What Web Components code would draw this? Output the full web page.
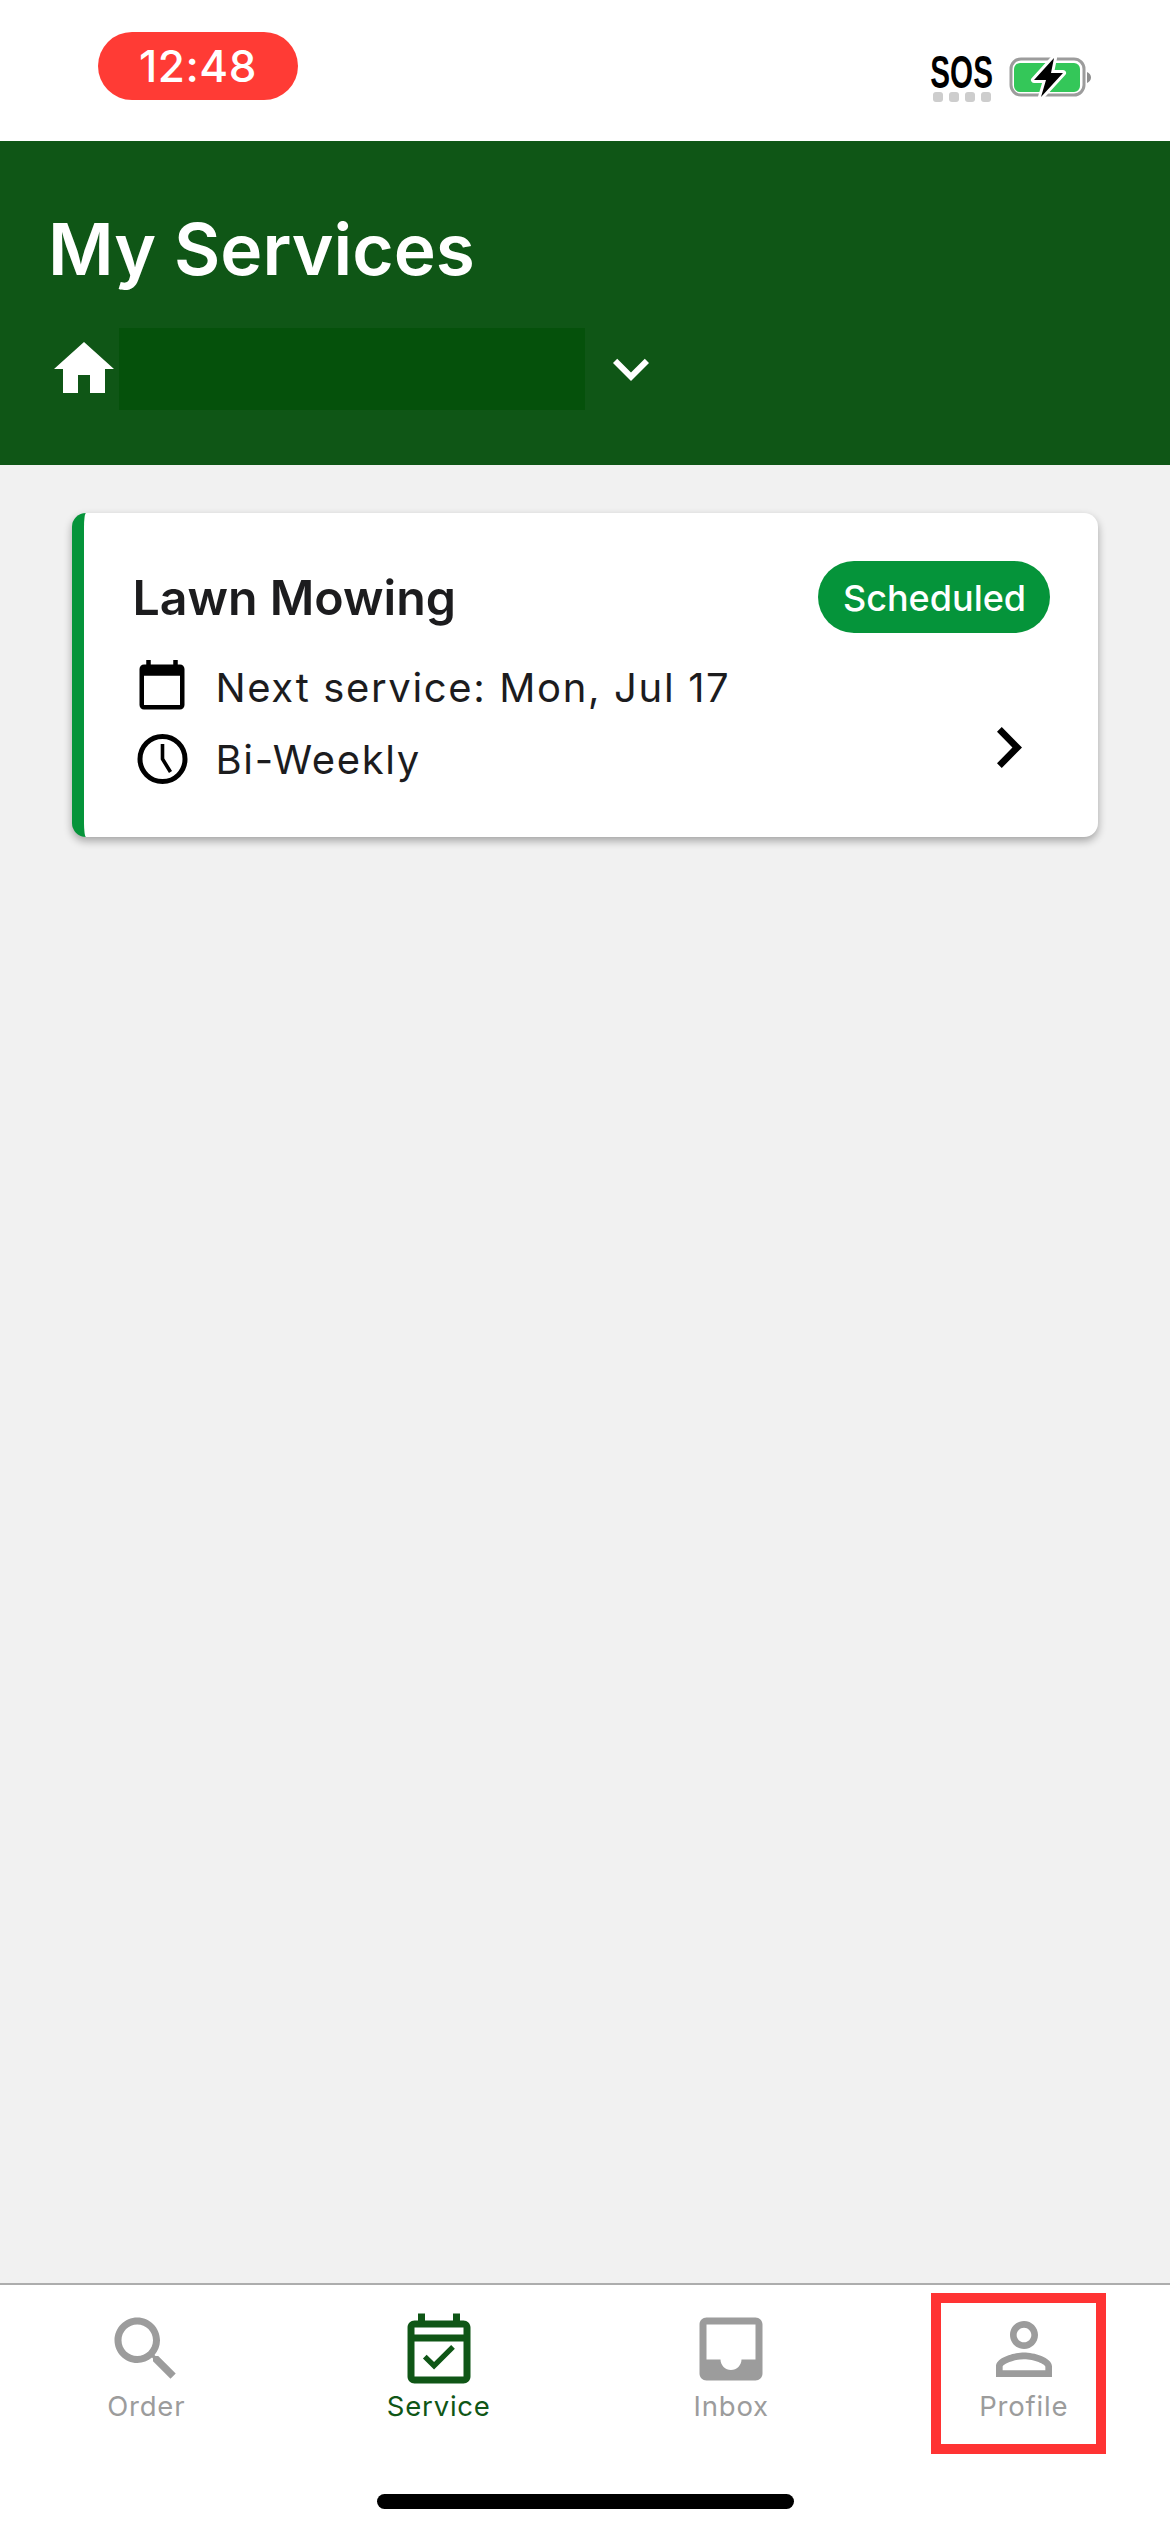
<!DOCTYPE html>
<html lang="en">
<head>
<meta charset="utf-8">
<title>My Services</title>
<style>
html,body{margin:0;padding:0;background:#f1f1f1}
body{font-family:Inter,"Liberation Sans",sans-serif}
</style>
</head>
<body>
<x-app>
  <x-status-bar slot="status" time="12:48"></x-status-bar>
  <x-page-header slot="header" title="My Services"></x-page-header>
  <x-service-card title="Lawn Mowing" status="Scheduled" next="Next service: Mon, Jul 17" freq="Bi-Weekly"></x-service-card>
  <x-tab-bar slot="tabs">
    <x-tab-item label="Order" icon="search"></x-tab-item>
    <x-tab-item label="Service" icon="event" active></x-tab-item>
    <x-tab-item label="Inbox" icon="inbox"></x-tab-item>
    <x-tab-item label="Profile" icon="person"></x-tab-item>
  </x-tab-bar>
</x-app>
<script>
function def(name, render){
  customElements.define(name, class extends HTMLElement{
    constructor(){super();this.attachShadow({mode:'open'});}
    connectedCallback(){this.shadowRoot.innerHTML=render(this);}
  });
}
def('x-app',()=>`<style>
:host{display:flex;flex-direction:column;width:1170px;height:2532px;overflow:hidden;background:#f1f1f1}
main{flex:1;min-height:0;padding:48px 72px 0;box-sizing:border-box}
</style><slot name="status"></slot><slot name="header"></slot><main><slot></slot></main><slot name="tabs"></slot>`);

def('x-status-bar',el=>`<style>
:host{display:flex;justify-content:space-between;height:141px;background:#fff;box-sizing:border-box;padding:32px 78px 0 98px;flex:none}
.time{width:200px;height:68px;border-radius:34px;background:#ff3b35;color:#fff;font:450 44px/68px Inter,"Liberation Sans",sans-serif;text-align:center;letter-spacing:.5px}
.right{display:flex;gap:17px;padding-top:24px;align-items:flex-start}
.sos{width:61px;display:flex;flex-direction:column;align-items:center}
.txt{font:700 47px/32px "Liberation Sans",sans-serif;color:#000;transform:scaleX(.63);transform-origin:center;height:32px;margin-bottom:4px;white-space:nowrap}
.dots{display:flex;gap:6px}
.dots i{width:10px;height:10px;border-radius:3px;background:#cdcdcd}
svg{display:block}
</style>
<div class="time">${el.getAttribute('time')}</div>
<div class="right">
  <div class="sos"><div class="txt">SOS</div><div class="dots"><i></i><i></i><i></i><i></i></div></div>
  <svg width="83" height="44" viewBox="0 0 83 44">
    <rect x="2" y="3" width="73" height="36" rx="10" fill="none" stroke="#9c9c9c" stroke-width="3"/>
    <rect x="5" y="7" width="66" height="29" rx="6" fill="#34c759"/>
    <path d="M78 16c2.500 1 4 3 4 5.500s-1.500 4.500-4 5.500z" fill="#8e8e8e"/>
    <path d="M45 2L25 24h12l-5 17 22-24H42z" fill="#000" stroke="#fff" stroke-width="6" stroke-linejoin="round" paint-order="stroke"/>
  </svg>
</div>`);

def('x-page-header',el=>`<style>
:host{display:block;height:324px;background:#0f5616;box-sizing:border-box;padding:64px 0 0 48px;flex:none}
h1{margin:0;font:600 71.200px/88px Inter,"Liberation Sans",sans-serif;color:#fff}
.row{display:flex;align-items:center;margin-top:35px;height:82px}
.mask{width:466px;height:82px;background:#05510b;margin-left:-1px;flex:none}
svg{display:block;flex:none;fill:#fff}
.chev{margin-left:10px}
</style>
<h1>${el.getAttribute('title')}</h1>
<div class="row">
  <svg width="72" height="72" viewBox="0 0 24 24"><path d="M10 20v-6h4v6h5v-8h3L12 3 2 12h3v8z"/></svg>
  <div class="mask"></div>
  <svg class="chev" width="72" height="72" viewBox="0 0 24 24"><path d="M16.590 8.590L12 13.170 7.410 8.590 6 10l6 6 6-6z"/></svg>
</div>`);

def('x-service-card',el=>`<style>
:host{display:block;height:324px;box-sizing:border-box;background:#fff;border-left:12px solid #05943a;border-radius:14px;box-shadow:0 4px 9px rgba(0,0,0,.32);font-family:Inter,"Liberation Sans",sans-serif;color:#1c1c1e}
.inner{display:flex;flex-direction:column;padding:48px 48px 0 48.500px;height:100%;box-sizing:border-box}
.top{display:flex;justify-content:space-between;align-items:center;height:72px}
h2{margin:0;padding-top:2px;font:600 48.300px/58px Inter,"Liberation Sans",sans-serif}
.pill{height:72px;width:232px;border-radius:36px;background:#05943a;color:#fff;font:500 36px/74px Inter,"Liberation Sans",sans-serif;text-align:center;padding-left:1px;box-sizing:border-box}
.body{display:flex;justify-content:space-between;align-items:flex-end;margin-top:25px}
.rows{display:flex;flex-direction:column;gap:12px}
.r{display:flex;align-items:center;height:60px;gap:23px;font:400 40px/60px Inter,"Liberation Sans",sans-serif;letter-spacing:1.650px}
svg{display:block;flex:none}
.chev{margin:0 28px 22px 0}
</style>
<div class="inner">
  <div class="top"><h2>${el.getAttribute('title')}</h2><div class="pill">${el.getAttribute('status')}</div></div>
  <div class="body">
    <div class="rows">
      <div class="r"><svg width="60" height="60" viewBox="0 0 60 60"><g transform="translate(2 -.25) scale(2.250)"><path d="M20 3h-1V1h-2v2H7V1H5v2H4c-1.100 0-2 .9-2 2v16c0 1.100.9 2 2 2h16c1.100 0 2-.9 2-2V5c0-1.100-.9-2-2-2zm0 18H4V8h16v13z" fill="#000"/></g></svg><span>${el.getAttribute('next')}</span></div>
      <div class="r"><svg width="60" height="60" viewBox="0 0 60 60"><circle cx="29.500" cy="29" r="22.500" fill="none" stroke="#000" stroke-width="5"/><path d="M29.500 14v15l8 13" fill="none" stroke="#000" stroke-width="3.600"/></svg><span>${el.getAttribute('freq')}</span></div>
    </div>
    <svg class="chev" width="25" height="41" viewBox="8.590 6 7.410 12" preserveAspectRatio="none"><path d="M10 6L8.590 7.410 13.170 12l-4.580 4.590L10 18l6-6z" fill="#000"/></svg>
  </div>
</div>`);

const ICONS={
 search:{vb:'0 0 24 24',d:'M15.500 14h-.79l-.28-.27C15.410 12.590 16 11.110 16 9.500 16 5.910 13.090 3 9.500 3S3 5.910 3 9.500 5.910 16 9.500 16c1.610 0 3.090-.59 4.230-1.570l.27.28v.79l5 4.990L20.490 19l-4.990-5zm-6 0C7.010 14 5 11.990 5 9.500S7.010 5 9.500 5 14 7.010 14 9.500 11.990 14 9.500 14z'},
 event:{vb:'0 -.86 24 24',d:'M16.530 11.060L15.470 10l-4.880 4.880-2.120-2.120-1.060 1.060L10.590 17l5.940-5.940zM19 3h-1V1h-2v2H8V1H6v2H5c-1.110 0-1.990.9-1.990 2L3 19c0 1.100.89 2 2 2h14c1.100 0 2-.9 2-2V5c0-1.100-.9-2-2-2zM5 5h14v2H5V5zm14 14H5V9h14v10z'},
 inbox:{vb:'0 0 24 24',d:'M19 3H5c-1.100 0-2 .9-2 2v14c0 1.100.9 2 2 2h14c1.100 0 2-.9 2-2V5c0-1.100-.9-2-2-2zm0 12h-4c0 1.660-1.350 3-3 3s-3-1.340-3-3H5V5h14v10z'},
 person:{vb:'0 0 24 24',d:'M12 5.900c1.160 0 2.100.94 2.100 2.100s-.94 2.100-2.100 2.100S9.900 9.160 9.900 8s.94-2.100 2.100-2.100m0 9c2.970 0 6.100 1.460 6.100 2.100v1.100H5.900V17c0-.64 3.130-2.100 6.100-2.100M12 4C9.790 4 8 5.790 8 8s1.790 4 4 4 4-1.790 4-4-1.790-4-4-4zm0 9c-2.670 0-8 1.340-8 4v3h16v-3c0-2.660-5.330-4-8-4z'}
};
def('x-tab-item',el=>{
 const ic=ICONS[el.getAttribute('icon')];
 return `<style>
:host{display:flex;flex-direction:column;align-items:center;color:${el.hasAttribute('active')?'#0f5616':'#9c9c9c'}}
svg{display:block;fill:currentColor;fill-rule:evenodd;flex:none}
span{font:400 27.500px/34px Inter,"Liberation Sans",sans-serif;letter-spacing:.8px;margin-top:-2px}
</style><svg width="84" height="84" viewBox="${ic.vb}"><path d="${ic.d}"/></svg><span>${el.getAttribute('label')}</span>`;
});

def('x-tab-bar',()=>`<style>
:host{display:block;position:relative;height:249px;background:#fff;border-top:2px solid #adadad;box-sizing:border-box;flex:none}
.tabs{display:grid;grid-template-columns:repeat(4,1fr);height:209px;padding-top:22px;box-sizing:border-box}
.ind{width:417px;height:15px;border-radius:8px;background:#000;margin:0 auto}
.mark{position:absolute;left:931px;top:8px;width:175px;height:161px;box-sizing:border-box;border:10px solid #ff3333}
</style><div class="tabs"><slot></slot></div><div class="ind"></div><div class="mark"></div>`);
</script>
</body>
</html>
